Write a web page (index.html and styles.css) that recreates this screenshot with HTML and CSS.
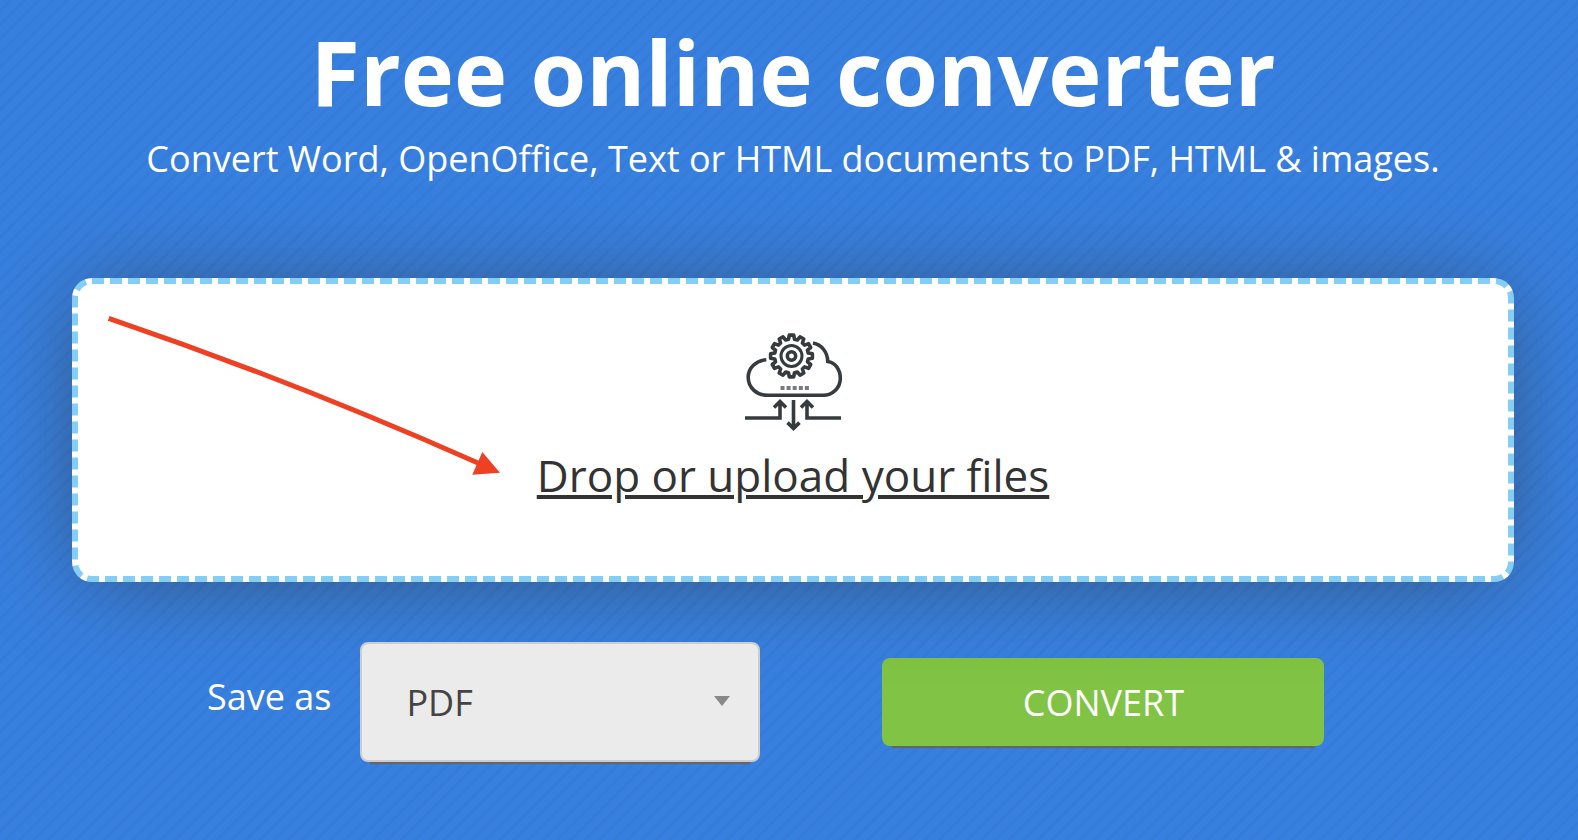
FILE: index.html
```
<!DOCTYPE html>
<html lang="en">
<head>
    <meta charset="UTF-8">
    <meta name="viewport" content="width=device-width, initial-scale=1.0">
    <title>Free online converter</title>
    <link rel="stylesheet" href="styles.css">
</head>
<body>
    <main class="converter">
        <h1>Free online converter</h1>
        <p class="subtitle">Convert Word, OpenOffice, Text or HTML documents to PDF, HTML &amp; images.</p>

        <div class="drop-area">
            <svg class="cloud-icon" viewBox="-2 0 96 96" fill="none" stroke="#363c3e" stroke-width="3.600" aria-hidden="true">
                <!-- cloud -->
                <path d="M19.3 25.7C9 26.5 1.2 34 1.2 43.3C1.2 54 10 61.3 20.700 61.3H76C86 61.3 93.3 53.500 93.3 44.500C93.3 35 88 28.500 80.800 27.500C80.500 18 74.500 10.500 66 9"/>
                <!-- gear -->
                <path transform="translate(44.500 22)" stroke-linejoin="round" d="M20.9 2.2L16.7 3L16 5.8L19.2 8.5L17 12.3L13 10.9L10.9 13L12.3 17L8.5 19.2L5.8 16L3 16.7L2.2 20.9L-2.2 20.9L-3 16.7L-5.8 16L-8.5 19.2L-12.3 17L-10.9 13L-13 10.9L-17 12.3L-19.2 8.5L-16 5.8L-16.7 3L-20.9 2.2L-20.9 -2.2L-16.7 -3L-16 -5.8L-19.2 -8.5L-17 -12.3L-13 -10.9L-10.9 -13L-12.3 -17L-8.5 -19.2L-5.8 -16L-3 -16.7L-2.2 -20.9L2.2 -20.9L3 -16.7L5.8 -16L8.5 -19.2L12.3 -17L10.9 -13L13 -10.9L17 -12.3L19.2 -8.5L16 -5.8L16.7 -3L20.9 -2.2Z"/>
                <circle cx="44.500" cy="22" r="10.5" stroke-width="3"/>
                <circle cx="44.500" cy="22" r="4.200" stroke-width="3.500"/>
                <path stroke="#777b7c" stroke-width="4" stroke-dasharray="4 2.1" d="M33.500 54H62"/>
                <!-- arrows -->
                <path d="M-2 84H33V68M27 73.600L33 67.600L39 73.600M94 84H60V68M54 73.600L60 67.600L66 73.600M46.500 66V94M40.500 88.600L46.500 94.400L52.500 88.600"/>
            </svg>
            <a href="#" class="upload-link">Drop or upload your files</a>
            <svg class="pointer" viewBox="0 0 400 164" aria-hidden="true">
                <path d="M4.700 8.300Q189 71 374 153" fill="none" stroke="#ee4023" stroke-width="5"/>
                <path d="M396 162.700L378.300 142L368.300 164.700Z" fill="#ee4023"/>
            </svg>
        </div>

        <form class="controls">
            <label for="format">Save as</label>
            <div class="select-wrap">
                <select id="format">
                    <option>PDF</option>
                    <option>HTML</option>
                </select>
            </div>
            <button type="button">CONVERT</button>
        </form>
    </main>
</body>
</html>
```
FILE: styles.css
```
* {
    box-sizing: border-box;
}
body {
    margin: 0;
    min-height: 100vh;
    font-family: "Open Sans", sans-serif;
    font-size: 36px;
    color: #fff;
    background: #3880df repeating-linear-gradient(135deg, #3880df 0, #3880df 5px, #357ad7 8px, #3880df 10px);
}
.converter {
    padding: 15px 64px 40px 72px;
    text-align: center;
}
h1 {
    margin: 0;
    font-size: 90px;
    line-height: 112px;
    font-weight: bold;
}
.subtitle {
    margin: 8px 0 95px;
    line-height: 48px;
}
.drop-area {
    position: relative;
    display: flex;
    flex-direction: column;
    align-items: center;
    padding: 50px 20px 71px;
    background-color: #fff;
    border: 6px dashed #84cdf3;
    border-radius: 20px;
    box-shadow: 0 4px 90px -12px rgba(50, 50, 50, 0.6);
}
.cloud-icon {
    width: 96px;
    height: 96px;
    margin-bottom: 15px;
    overflow: visible;
}
.upload-link {
    font-size: 44px;
    line-height: 60px;
    color: #333;
}
/* red arrow over the drop area */
.pointer {
    position: absolute;
    top: 26px;
    left: 26px;
    width: 400px;
    height: 164px;
    overflow: visible;
    pointer-events: none;
}
.controls {
    display: flex;
    align-items: center;
    margin-top: 60px;
    padding-left: 135px;
}
.controls label {
    margin-right: 29px;
    padding-bottom: 10px;
    line-height: 48px;
}
.select-wrap {
    position: relative;
    flex: 0 1 400px;
    margin-right: 122px;
}
.select-wrap::after {
    content: "";
    position: absolute;
    top: 54px;
    right: 30px;
    border: 8px solid transparent;
    border-top: 10px solid #888;
    border-bottom: 0;
    pointer-events: none;
}
.controls select {
    display: block;
    width: 100%;
    height: 120px;
    padding: 0 44px;
    font: inherit;
    color: #444;
    background-color: #ebebeb;
    border: 2px solid #ccc;
    border-radius: 8px;
    box-shadow: 0 12px 1px -10px #666;
    appearance: none;
}
.controls button {
    flex: 0 1 442px;
    height: 88px;
    padding: 0;
    font: inherit;
    color: #fff;
    background-color: #81c344;
    border: none;
    border-radius: 8px;
    box-shadow: 0 12px 1px -10px #666;
    cursor: pointer;
}
```
